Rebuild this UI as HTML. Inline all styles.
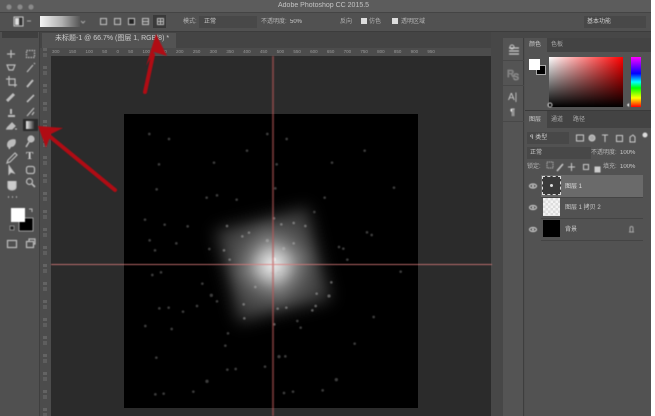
<!DOCTYPE html>
<html><head><meta charset="utf-8"><style>
html,body{margin:0;padding:0;background:#fff}
#p{position:relative;width:655px;height:416px;overflow:hidden;background:#fff;font-family:"Liberation Sans","Noto Sans CJK SC",sans-serif}
#p div{position:absolute}
.t{color:#b4b4b4;font-size:6px;line-height:8px;white-space:nowrap;filter:blur(.35px)}
svg{position:absolute;left:0;top:0;z-index:5;filter:blur(.4px)}
</style></head><body><div id="p">
<div style="left:0;top:0;width:651px;height:416px;background:#4f4f4f"></div>
<div style="left:0;top:0;width:651px;height:12px;background:#5c5c5c"></div>
<div style="left:0;top:12px;width:651px;height:20px;background:#515151;border-top:1px solid #444;border-bottom:1px solid #3c3c3c;box-sizing:border-box"></div>
<div class="t" style="left:278px;top:2px;font-size:7px;color:#c4c4c4">Adobe Photoshop CC 2015.5</div>
<div style="left:40px;top:16px;width:40px;height:11px;background:linear-gradient(90deg,#f4f4f4,#b0b0b0 55%,#555);"></div>
<div style="left:153px;top:15px;width:13px;height:13px;background:#3a3a3a"></div>
<div class="t" style="left:183px;top:18px">模式:</div>
<div style="left:199px;top:16px;width:58px;height:12px;background:#484848"></div>
<div class="t" style="left:204px;top:18px;color:#ccc">正常</div>
<div class="t" style="left:261px;top:18px">不透明度:</div>
<div class="t" style="left:290px;top:18px;color:#ccc">50%</div>
<div class="t" style="left:340px;top:18px">反向</div>
<div style="left:361px;top:18px;width:6px;height:6px;background:#ddd"></div>
<div class="t" style="left:369px;top:18px">仿色</div>
<div style="left:392px;top:18px;width:6px;height:6px;background:#ddd"></div>
<div class="t" style="left:401px;top:18px">透明区域</div>
<div style="left:584px;top:16px;width:62px;height:12px;background:#484848"></div>
<div class="t" style="left:587px;top:18px;color:#ccc">基本功能</div>

<div style="left:40px;top:32px;width:463px;height:16px;background:#444"></div>
<div style="left:42px;top:33px;width:134px;height:15px;background:#535353"></div>
<div class="t" style="left:55px;top:34px;font-size:7px;line-height:10px;color:#ccc">未标题-1 @ 66.7% (图层 1, RGB/8) *</div>
<div style="left:40px;top:48px;width:451px;height:8px;background:#4c4c4c"></div>
<div class="t" style="left:52px;top:49px;font-size:4.5px;line-height:6px;color:#999;word-spacing:8px">300 150 100 50 0 50 100 150 200 250 300 350 400 450 500 550 600 650 700 750 800 850 900 950</div>
<div style="left:40px;top:48px;width:11px;height:368px;background:linear-gradient(90deg,#4c4c4c 3px,transparent 3px,transparent 7px,#4c4c4c 7px),repeating-linear-gradient(180deg,#636363 0 3px,#4c4c4c 3px 5px,#5e5e5e 5px 9px,#4c4c4c 9px 18px)"></div>
<div style="left:0;top:32px;width:40px;height:384px;background:#505050;border-right:1px solid #3f3f3f;box-sizing:border-box"></div>
<div style="left:2px;top:32px;width:36px;height:6px;background:#3f3f3f"></div>

<div style="left:51px;top:56px;width:440px;height:360px;background:#2b2b2b"></div>
<div style="left:124px;top:114px;width:294px;height:294px;background:#000;overflow:hidden">
 <div style="left:95px;top:97px;width:108px;height:108px;transform:rotate(-14deg);filter:blur(4px)">
  <div style="left:6px;top:6px;width:96px;height:96px;background:#363636;filter:blur(7px)"></div>
  <div style="left:0;top:0;width:108px;height:108px;background:linear-gradient(90deg,#0000 5%,#bdbdbd 50%,#0000 95%);-webkit-mask-image:linear-gradient(180deg,#0000 5%,#000 50%,#0000 95%);mask-image:linear-gradient(180deg,#0000 5%,#000 50%,#0000 95%)"></div>
  <div style="left:19px;top:19px;width:70px;height:70px;border-radius:50%;background:radial-gradient(circle closest-side,#f4f4f4 0,#c8c8c8cc 35%,#8888884d 70%,#0000 100%)"></div>
 </div>
</div>

<svg width="655" height="416" viewBox="0 0 655 416">
<g transform="translate(110 100) scale(.33333)" fill="#4c4c4c" opacity=".8">
<circle cx="118" cy="102" r="4"/><circle cx="177" cy="117" r="4"/><circle cx="472" cy="102" r="4"/><circle cx="530" cy="117" r="4"/><circle cx="411" cy="152" r="4"/><circle cx="764" cy="152" r="4"/><circle cx="147" cy="193" r="4"/><circle cx="312" cy="188" r="4"/><circle cx="500" cy="193" r="4"/><circle cx="666" cy="188" r="4"/><circle cx="140" cy="268" r="4"/><circle cx="496" cy="265" r="4"/><circle cx="852" cy="263" r="4"/><circle cx="290" cy="293" r="4"/><circle cx="321" cy="286" r="4"/><circle cx="380" cy="299" r="4"/><circle cx="644" cy="293" r="4"/><circle cx="613" cy="336" r="4"/><circle cx="105" cy="359" r="4"/><circle cx="164" cy="374" r="4"/><circle cx="233" cy="379" r="4"/><circle cx="771" cy="397" r="4"/><circle cx="785" cy="405" r="4"/><circle cx="119" cy="421" r="4"/><circle cx="199" cy="430" r="4"/><circle cx="135" cy="451" r="4"/><circle cx="298" cy="447" r="4"/><circle cx="687" cy="441" r="4"/><circle cx="700" cy="446" r="4"/><circle cx="712" cy="479" r="4"/><circle cx="127" cy="525" r="4"/><circle cx="153" cy="517" r="4"/><circle cx="872" cy="515" r="4"/><circle cx="277" cy="551" r="4"/><circle cx="304" cy="586" r="5"/><circle cx="321" cy="604" r="4"/><circle cx="261" cy="618" r="4"/><circle cx="148" cy="625" r="4"/><circle cx="176" cy="623" r="4"/><circle cx="219" cy="635" r="4"/><circle cx="106" cy="678" r="4"/><circle cx="185" cy="687" r="4"/><circle cx="791" cy="651" r="4"/><circle cx="354" cy="700" r="4"/><circle cx="346" cy="737" r="4"/><circle cx="562" cy="663" r="4"/><circle cx="572" cy="683" r="4"/><circle cx="734" cy="731" r="4"/><circle cx="139" cy="773" r="4"/><circle cx="507" cy="770" r="5"/><circle cx="526" cy="769" r="4"/><circle cx="465" cy="800" r="4"/><circle cx="352" cy="809" r="4"/><circle cx="377" cy="807" r="4"/><circle cx="291" cy="844" r="5"/><circle cx="679" cy="839" r="5"/><circle cx="136" cy="883" r="4"/><circle cx="161" cy="881" r="4"/><circle cx="250" cy="875" r="4"/><circle cx="522" cy="879" r="4"/><circle cx="549" cy="875" r="4"/><circle cx="638" cy="871" r="4"/>
</g>
<g transform="translate(110 100) scale(.33333)" fill="#bdbdbd" opacity=".45">
<circle cx="492" cy="355" r="4"/><circle cx="514" cy="373" r="4"/><circle cx="551" cy="369" r="4"/><circle cx="586" cy="378" r="4"/><circle cx="351" cy="378" r="4"/><circle cx="397" cy="409" r="4"/><circle cx="417" cy="398" r="4"/><circle cx="472" cy="422" r="5"/><circle cx="551" cy="430" r="4"/><circle cx="521" cy="446" r="5"/><circle cx="342" cy="451" r="4"/><circle cx="359" cy="479" r="4"/><circle cx="492" cy="478" r="6" fill="#fff"/><circle cx="484" cy="520" r="4"/><circle cx="506" cy="518" r="4"/><circle cx="514" cy="522" r="4"/><circle cx="436" cy="561" r="4"/><circle cx="664" cy="547" r="4"/><circle cx="620" cy="581" r="4"/><circle cx="657" cy="588" r="5"/><circle cx="401" cy="613" r="4"/><circle cx="503" cy="626" r="4"/><circle cx="529" cy="623" r="4"/><circle cx="617" cy="618" r="4"/><circle cx="607" cy="631" r="4"/><circle cx="403" cy="655" r="4"/><circle cx="493" cy="673" r="4"/>
</g>
<rect x="272" y="56" width="2" height="360" fill="#b85858" opacity=".55"/>
<rect x="51" y="264" width="441" height="1" fill="#dc7c7c" opacity=".8"/>

<circle cx="9" cy="7" r="2.6" fill="#8a8a8a"/><circle cx="20" cy="7" r="2.6" fill="#8a8a8a"/><circle cx="31" cy="7" r="2.6" fill="#8a8a8a"/>
<rect x="14" y="17" width="9" height="9" fill="#333" stroke="#ccc"/><rect x="15" y="18" width="4" height="7" fill="#ddd"/>
<path d="M27 21h4" stroke="#aaa"/><path d="M81 21l2 2 2-2" stroke="#aaa" fill="none"/>
<g fill="none" stroke="#c4c4c4"><rect x="100.500" y="18.500" width="6" height="6"/><rect x="114.500" y="18.500" width="6" height="6"/><rect x="128.500" y="18.500" width="6" height="6" fill="#222"/><rect x="142.500" y="18.500" width="6" height="6"/><path d="M142 21.500h7"/><rect x="157.500" y="18.500" width="6" height="6"/><path d="M157 21.500h7M160.500 18v7"/></g>

<g fill="none" stroke="#bdbdbd" stroke-width="1.200">
<path d="M7 54h8M11 50v8"/><rect x="26.500" y="50.500" width="8" height="7" stroke-dasharray="1.500 1"/>
<path d="M7 65l8 0-2 5-4 0z"/><path d="M27 72l6-7M34 63l1 1"/>
<path d="M9 76v9h8M6 79h9v8"/><path d="M27 87l6-7" stroke-width="2"/>
<path d="M7 101l7-7" stroke-width="3"/><path d="M27 102l7-7" stroke-width="1.600"/>
<path d="M8 116h7M11 109v5" stroke-width="2"/><path d="M27 116l7-8M32 115l2-3"/>
<path d="M7 128l5-5 3 3-3 3h-6" fill="#bbb"/><path d="M15 129h2"/>
<path d="M8 147c-2-6 4-8 7-7 1 4-2 7-4 6l-2 3" fill="#bbb"/><circle cx="31" cy="139" r="3" fill="#bbb"/><path d="M29 142l-3 5" stroke-width="1.500"/>
<path d="M8 160l7-7 2 2-7 7-3 1z"/>
<path d="M9 166l0 8 2-2 3 1z" fill="#ccc"/><rect x="26.500" y="166.500" width="8" height="7" rx="2"/>
<path d="M8 181v6c0 2 2 3 4 3s4-1 4-3v-6" fill="#ccc"/><circle cx="29.500" cy="181.500" r="3"/><path d="M32 184l3 3" stroke-width="1.600"/>
<path d="M8 197h1M12 197h1M16 197h1" stroke-width="1.600"/>
<rect x="7.500" y="240.500" width="9" height="7"/><rect x="26.500" y="241.500" width="7" height="6"/><path d="M29 241v-2h6v5h-1"/>
</g>
<text x="26" y="159" font-family="Liberation Serif,serif" font-size="11" font-weight="bold" fill="#d4d4d4">T</text>
<defs><linearGradient id="gr"><stop offset="0" stop-color="#eee"/><stop offset="1" stop-color="#222"/></linearGradient></defs>
<rect x="23" y="119" width="15" height="12" fill="#2b2b2b"/><rect x="26" y="121" width="9" height="8" fill="url(#gr)"/>
<rect x="19" y="218" width="14" height="13" fill="#000" stroke="#ccc" stroke-width=".7"/>
<rect x="11" y="208" width="14" height="14" fill="#fff"/>
<rect x="10" y="226" width="4" height="4" fill="#222" stroke="#bbb" stroke-width=".6"/>
<path d="M29 209h3v3" stroke="#bbb" fill="none"/>

<g stroke="#ccc" fill="none"><path d="M509 48h10M509 51h10M509 54h10" stroke-width="1.200"/><circle cx="512" cy="47" r="2"/></g>
<text x="507" y="77" font-family="Liberation Sans,sans-serif" font-size="10" fill="none" stroke="#9a9a9a" stroke-width=".6">R</text>
<text x="513" y="80" font-family="Liberation Sans,sans-serif" font-size="9" fill="none" stroke="#9a9a9a" stroke-width=".6">S</text>
<text x="508" y="100" font-family="Liberation Sans,sans-serif" font-size="10" fill="#ccc">A|</text>
<text x="510" y="115" font-family="Liberation Sans,sans-serif" font-size="9" font-weight="bold" fill="#ddd">¶</text>
<g fill="none" stroke="#ccc"><rect x="576.500" y="135" width="7" height="6"/><circle cx="592" cy="138" r="3" fill="#aaa"/><path d="M602 135h6M605 135v7"/><rect x="616.500" y="135.500" width="6" height="6"/><path d="M630 142v-5l3-2 2 2v5z"/></g>
<circle cx="645" cy="135" r="2.500" fill="#ddd"/>
<g fill="#ccc" stroke="#ccc"><rect x="547" y="162" width="6" height="6" fill="none" stroke-dasharray="1 1"/><path d="M557 171l6-7" stroke-width="1.500"/><path d="M568 167h7M571.500 163v8" fill="none"/><rect x="583.500" y="164.500" width="5" height="5" fill="none"/><rect x="595" y="167" width="5" height="5"/></g>
<g fill="none" stroke="#ddd"><ellipse cx="533" cy="186" rx="3.500" ry="2"/><ellipse cx="533" cy="207.500" rx="3.500" ry="2"/><ellipse cx="533" cy="229.500" rx="3.500" ry="2"/></g>
<g fill="#ddd"><circle cx="533" cy="186" r="1"/><circle cx="533" cy="207.500" r="1"/><circle cx="533" cy="229.500" r="1"/></g>
<path d="M630 232v-4a1.500 1.500 0 0 1 3 0v4zm-1 0h5" fill="none" stroke="#aaa"/>
<circle cx="550" cy="105" r="2" fill="none" stroke="#ccc"/>
<path d="M627 105l2-2v4z" fill="#fff"/>

<path d="M145 92L153 55" stroke="#b00c14" stroke-width="4" stroke-linecap="round" fill="none"/>
<path d="M146 66L156 34 167 56 154 52z" fill="#b00c14"/>
<path d="M115 190L48 135" stroke="#b00c14" stroke-width="4" stroke-linecap="round" fill="none"/>
<path d="M38 126L63 128 51 134 46 148z" fill="#b00c14"/>
</svg>

<div style="left:491px;top:32px;width:12px;height:384px;background:#474747"></div>
<div style="left:503px;top:32px;width:21px;height:384px;background:#545454;border-right:1px solid #3e3e3e;box-sizing:border-box"></div>
<div style="left:503px;top:32px;width:21px;height:6px;background:#474747"></div>
<div style="left:503px;top:60px;width:21px;height:1px;background:#484848"></div>
<div style="left:503px;top:85px;width:21px;height:1px;background:#484848"></div>
<div style="left:503px;top:121px;width:21px;height:1px;background:#484848"></div>
<div style="left:524px;top:32px;width:127px;height:6px;background:#474747"></div>
<div style="left:525px;top:38px;width:126px;height:73px;background:#535353;border-bottom:1px solid #3a3a3a;box-sizing:border-box"></div>
<div style="left:525px;top:38px;width:126px;height:14px;background:#434343"></div>
<div style="left:525px;top:38px;width:22px;height:14px;background:#535353"></div>
<div class="t" style="left:529px;top:41px;color:#ccc">颜色</div>
<div class="t" style="left:551px;top:41px;color:#aaa">色板</div>
<div style="left:536px;top:65px;width:10px;height:10px;background:#000;border:1px solid #aaa;box-sizing:border-box"></div>
<div style="left:529px;top:59px;width:11px;height:11px;background:#fff"></div>
<div style="left:549px;top:57px;width:74px;height:50px;background:linear-gradient(180deg,transparent,#000),linear-gradient(90deg,#fff,#f00)"></div>
<div style="left:631px;top:57px;width:10px;height:50px;background:linear-gradient(180deg,#f0f,#00f 33%,#0ff 50%,#0f0 62%,#ff0 82%,#f00)"></div>

<div style="left:525px;top:111px;width:126px;height:305px;background:#525252"></div>
<div style="left:525px;top:111px;width:126px;height:17px;background:#434343"></div>
<div style="left:525px;top:111px;width:22px;height:17px;background:#525252"></div>
<div class="t" style="left:529px;top:116px;color:#ccc">图层</div>
<div class="t" style="left:551px;top:116px;color:#aaa">通道</div>
<div class="t" style="left:573px;top:116px;color:#aaa">路径</div>
<div style="left:527px;top:132px;width:42px;height:12px;background:#484848"></div>
<div class="t" style="left:530px;top:134px;color:#ccc">ꟼ 类型</div>
<div style="left:527px;top:147px;width:64px;height:12px;background:#484848"></div>
<div class="t" style="left:530px;top:149px;color:#ccc">正常</div>
<div class="t" style="left:591px;top:149px">不透明度:</div>
<div class="t" style="left:620px;top:149px;color:#ccc">100%</div>
<div class="t" style="left:527px;top:163px">锁定:</div>
<div class="t" style="left:603px;top:163px">填充:</div>
<div class="t" style="left:620px;top:163px;color:#ccc">100%</div>

<div style="left:541px;top:175px;width:102px;height:22px;background:#6a6a6a"></div>
<div style="left:542px;top:176px;width:19px;height:19px;background:#3a3a3a;border:1px dashed #ddd;box-sizing:border-box"></div>
<div style="left:550px;top:184px;width:3px;height:3px;background:#ddd;border-radius:50%"></div>
<div class="t" style="left:565px;top:183px;color:#ddd">图层 1</div>
<div style="left:541px;top:197px;width:102px;height:1px;background:#444"></div>
<div style="left:543px;top:198px;width:17px;height:18px;background:repeating-conic-gradient(#ddd 0 25%,#f4f4f4 0 50%) 0 0/5px 5px"></div>
<div class="t" style="left:565px;top:204px;color:#ccc">图层 1 拷贝 2</div>
<div style="left:541px;top:218px;width:102px;height:1px;background:#444"></div>
<div style="left:543px;top:220px;width:17px;height:17px;background:#000"></div>
<div class="t" style="left:565px;top:226px;color:#ccc">背景</div>
<div style="left:541px;top:240px;width:102px;height:1px;background:#444"></div>
</div></body></html>
